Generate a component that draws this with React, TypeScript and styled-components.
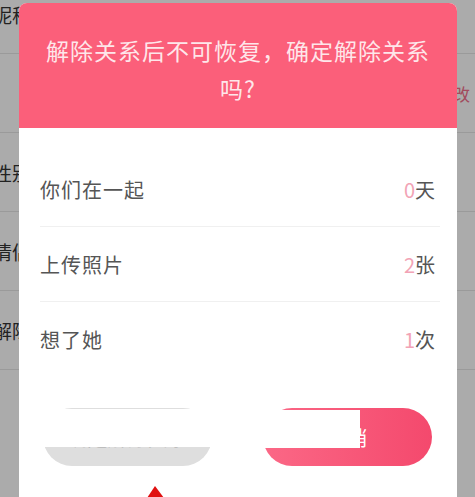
import React from 'react';
import styled, { createGlobalStyle } from 'styled-components';

const GlobalStyle = createGlobalStyle`
  html, body {
    margin: 0;
    padding: 0;
    width: 475px;
    height: 497px;
    overflow: hidden;
    background: #ffffff;
    font-family: "Noto Sans CJK SC", "Noto Sans", "Liberation Sans", sans-serif;
  }
`;

const Page = styled.div`
  position: relative;
  width: 475px;
  height: 497px;
  overflow: hidden;
`;

const SettingList = styled.div`
  display: flex;
  flex-direction: column;
  margin-top: -25px;
`;

const SettingRow = styled.div`
  display: flex;
  align-items: center;
  justify-content: space-between;
  height: 78px;
  border-bottom: 1px solid #e6e6e6;
  padding-right: 5px;
`;

const SettingLabel = styled.span`
  margin-left: -7px;
  font-size: 19px;
  color: #333333;
`;

const SettingAction = styled.span`
  font-size: 17px;
  color: #f2708b;
`;

const Mask = styled.div`
  position: absolute;
  inset: 0;
  background: rgba(0, 0, 0, 0.33);
`;

const Dialog = styled.div`
  position: absolute;
  top: 3px;
  left: 19px;
  width: 438px;
  height: 540px;
  background: #ffffff;
  border-radius: 8px 8px 0 0;
  overflow: hidden;
  display: flex;
  flex-direction: column;
`;

const DialogHeader = styled.div`
  background: #fb5f7a;
  padding: 28px 22px 21px;
  text-align: center;
  font-size: 23px;
  letter-spacing: 1px;
  line-height: 38px;
  color: rgba(255, 255, 255, 0.86);
`;

const StatList = styled.div`
  display: flex;
  flex-direction: column;
  padding: 24px 17px 0 21px;
`;

const StatRow = styled.div<{ $last?: boolean }>`
  display: flex;
  align-items: center;
  justify-content: space-between;
  height: 74px;
  padding-right: 5px;
  border-bottom: ${({ $last }) => ($last ? 'none' : '1px solid #f0f0f0')};
  font-size: 20px;
  letter-spacing: 1px;
  color: #555555;
`;

const StatValue = styled.span`
  letter-spacing: 0;
`;

const StatNumber = styled.span`
  color: #f2a3b5;
`;

const ButtonBar = styled.div`
  display: flex;
  justify-content: space-between;
  padding: 32px 25px 0 24px;
`;

const DialogButton = styled.div<{ $primary?: boolean }>`
  position: relative;
  width: 169px;
  height: 58px;
  border-radius: 29px;
  display: flex;
  align-items: center;
  justify-content: center;
  font-size: 20px;
  color: ${({ $primary }) => ($primary ? '#ffffff' : '#a8a8a8')};
  background: ${({ $primary }) =>
    $primary ? 'linear-gradient(90deg, #fb6886 0%, #f4496d 100%)' : '#dedede'};
`;

const Patch = styled.div`
  position: absolute;
  background: #ffffff;
`;

const Pointer = styled.svg`
  position: absolute;
  left: 145px;
  top: 484px;
`;

const settings = [
  { key: 'nick', label: '昵称' },
  { key: 'avatar', label: '', action: '修改' },
  { key: 'sex', label: '性别' },
  { key: 'couple', label: '情侣空间' },
  { key: 'unbind', label: '解除关系' }
];

const stats = [
  { name: '你们在一起', count: 0, unit: '天' },
  { name: '上传照片', count: 2, unit: '张' },
  { name: '想了她', count: 1, unit: '次' }
];

export default function App() {
  return (
    <Page>
      <GlobalStyle />
      <SettingList>
        {settings.map(item => (
          <SettingRow key={item.key}>
            <SettingLabel>{item.label}</SettingLabel>
            {item.action && <SettingAction>{item.action}</SettingAction>}
          </SettingRow>
        ))}
      </SettingList>
      <Mask />
      <Dialog>
        <DialogHeader>解除关系后不可恢复，确定解除关系吗?</DialogHeader>
        <StatList>
          {stats.map((s, i) => (
            <StatRow key={s.name} $last={i === stats.length - 1}>
              <span>{s.name}</span>
              <StatValue>
                <StatNumber>{s.count}</StatNumber>
                {s.unit}
              </StatValue>
            </StatRow>
          ))}
        </StatList>
        <ButtonBar>
          <DialogButton>
            确定解除关系
            <Patch style={{ left: -3, top: 1, width: 175, height: 38 }} />
          </DialogButton>
          <DialogButton $primary>
            取消
            <Patch style={{ left: -2, top: 2, width: 99, height: 38 }} />
          </DialogButton>
        </ButtonBar>
      </Dialog>
      <Pointer width='22' height='14' viewBox='0 0 22 14'>
        <polygon points='10,2 2,14 19,14' fill='#e01010' />
      </Pointer>
    </Page>
  );
}
